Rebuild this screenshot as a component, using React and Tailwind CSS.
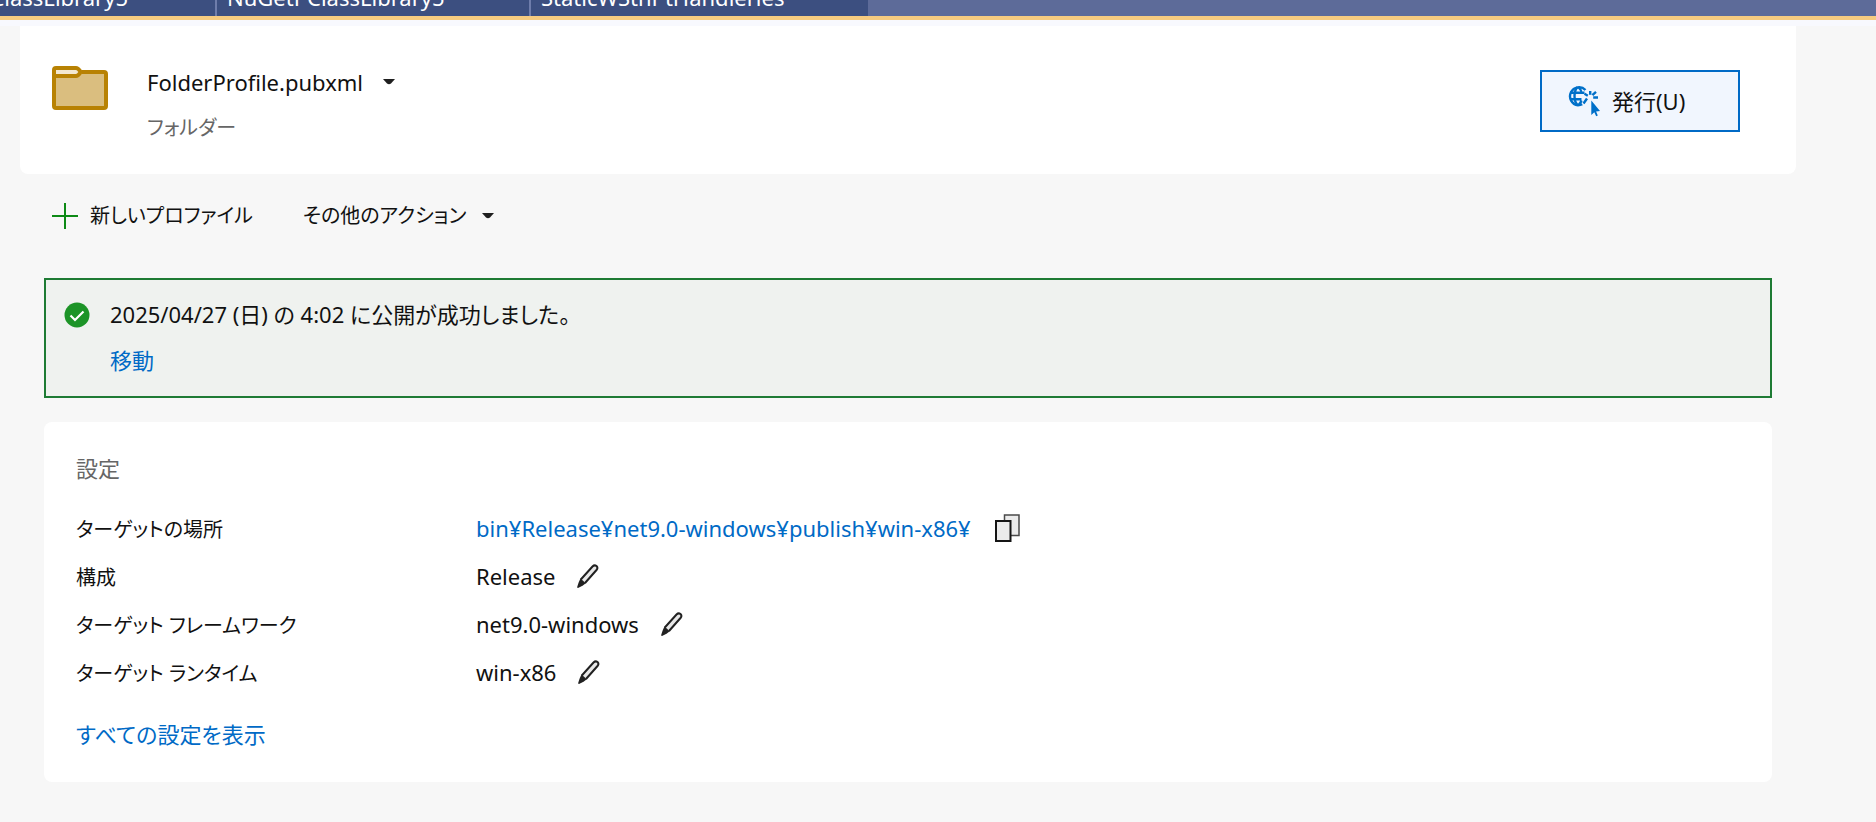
const Caret = () => (
  <svg className="h-[6px] w-3 shrink-0" viewBox="0 0 12 6" fill="#1f1f1f" aria-hidden="true">
    <path d="M0 0h12L8 4.4Q6 6 4 4.4Z" />
  </svg>
);

const FolderIcon = () => (
  <svg className="h-11 w-14 shrink-0" viewBox="0 0 56 44" aria-hidden="true">
    <path d="M2 10V40q0 2 2 2H52q2 0 2-2V8q0-2-2-2H30" fill="#dabe7f" stroke="#b88203" strokeWidth="4" />
    <path d="M2 10V4q0-2 2-2H24q2 0 4 3 1 1 0 2-2 3-4 3Z" fill="#f3e8d0" stroke="#b88203" strokeWidth="4" />
  </svg>
);

const PublishIcon = () => (
  <svg className="h-8 w-8 shrink-0" viewBox="0 0 32 32" aria-hidden="true" fill="none" stroke="#0070c9" strokeWidth="2.400">
    <path d="M17.500 5A9 9 0 1 0 10 20.200c1.500 0 3-.3 4.200-1" />
    <path d="M9.500 2.200C5.500 6 5.500 16 9.500 20M10.500 2.200c2 1.800 3 3.800 3.400 6.500M2 7.800h14.500M2 14.200h11.500M10.500 20c1.500-1.200 2.400-2.700 3-4.500" />
    <path d="M22.200 6v3.800M28 6.800l-3.600 3.400M25.200 12.500H30M19.800 10.800l-3.300-2M19 13.500l-3.500 5" />
    <path d="M23.300 15.500v14.500l3-2.800 1.900 4 1.600-.7-1.700-4 4-.5Z" fill="#0070c9" stroke="none" />
  </svg>
);

const Pencil = () => (
  <svg className="h-6 w-[22px]" viewBox="0 0 22 24" aria-hidden="true">
    <path d="M3.800 15.500 15.500 2.500q2-2 4-.5 1.800 1.800 0 4L8 19" fill="#e8e8e8" stroke="#212121" strokeWidth="2" />
    <path d="M3.500 14.500 8.800 19.300 5.500 21.800 1 24q-1 0-.8-1L1.800 18Z" fill="#212121" />
  </svg>
);

const CopyIcon = () => (
  <svg className="h-7 w-[25px]" viewBox="0 0 25 28" aria-hidden="true" fill="#ebebeb">
    <path d="M9.500 1H24v20.500H9.500Z" stroke="#4a4a4a" strokeWidth="1.500" />
    <path d="M1 7h14.500v20H1Z" stroke="#151515" strokeWidth="2" />
  </svg>
);

const settings = [
  { label: "構成", value: "Release" },
  { label: "ターゲット フレームワーク", value: "net9.0-windows" },
  { label: "ターゲット ランタイム", value: "win-x86" },
];

const link = "text-[#006ac6] hover:underline";

export default function App() {
  return (
    <div className="min-h-screen bg-[#f7f7f7] font-['Noto_Sans','Noto_Sans_CJK_JP',sans-serif] text-[22px] leading-8 text-[#111111] [font-feature-settings:'palt']">
      <nav className="flex h-5 items-end overflow-hidden border-b-4 border-[#f6cb80] bg-[#5d6b99] leading-7 text-white">
        <div className="flex divide-x-2 divide-[#6f7dab] bg-[#3c4f80]">
          <a href="#class-library" className="flex w-[217px] justify-end pr-[87px] pb-[5px] whitespace-nowrap">ClassLibrary5</a>
          <a href="#nuget" className="w-[314px] pb-[5px] pl-[10px] whitespace-nowrap">NuGetPClassLibrary5</a>
          <a href="#handlers" className="w-[337px] pb-[5px] pl-[10px] whitespace-nowrap">StaticWSthPtHandlerles</a>
        </div>
      </nav>
      <div className="h-[6px] bg-[#f8f9fe]" />

      <main className="pr-20 pl-5">
        <header className="flex h-[148px] items-start justify-between rounded-b-lg bg-white pt-10 pr-14 pl-8">
          <div className="flex gap-[39px]">
            <FolderIcon />
            <div>
              <button type="button" className="flex items-center gap-5">
                FolderProfile.pubxml
                <Caret />
              </button>
              <p className="mt-[14px] text-xl leading-8 text-[#666666]">フォルダー</p>
            </div>
          </div>
          <button type="button" className="mt-1 flex h-[62px] w-[200px] items-center gap-3 border-2 border-[#006ac6] bg-[#f1f6fe] pl-[26px]">
            <PublishIcon />
            発行(U)
          </button>
        </header>

        <div className="flex gap-[50px] pt-[26px] pl-8 text-xl leading-8">
          <button type="button" className="flex items-center gap-3">
            <svg className="h-[26px] w-[26px]" viewBox="0 0 26 26" stroke="#0d8a16" strokeWidth="2" aria-hidden="true">
              <path d="M13 0v26M0 13h26" />
            </svg>
            新しいプロファイル
          </button>
          <button type="button" className="flex items-center gap-4">
            その他のアクション
            <Caret />
          </button>
        </div>

        <div className="pr-6 pl-6">
          <section className="mt-[46px] flex h-[120px] gap-5 border-2 border-[#1e7b34] bg-[#eff2ef] pt-[18px] pl-[18px]">
            <svg className="mt-1 h-[26px] w-[26px]" viewBox="0 0 26 26" aria-hidden="true">
              <circle cx="13" cy="13" r="12.500" fill="#1c9427" />
              <path d="m6.500 13.500 4.500 4.500 8.500-8.500" fill="none" stroke="#fff" strokeWidth="2.200" />
            </svg>
            <div>
              <p>2025/04/27 (日) の 4:02 に公開が成功しました。</p>
              <a href="#open" className={`mt-[14px] inline-block ${link}`}>移動</a>
            </div>
          </section>

          <section className="mt-6 h-[360px] rounded-lg bg-white pt-[30px] pl-8">
            <h2 className="text-[#666666]">設定</h2>
            <dl className="mt-5 grid grid-cols-[400px_1fr]">
              <dt className="h-12 pt-[10px] text-xl leading-8">ターゲットの場所</dt>
              <dd className="flex h-12 items-center gap-6">
                <a href="#target" className={link}>bin¥Release¥net9.0-windows¥publish¥win-x86¥</a>
                <button type="button" aria-label="コピー"><CopyIcon /></button>
              </dd>
              {settings.map((s) => (
                <div key={s.label} className="contents">
                  <dt className="h-12 pt-[10px] text-xl leading-8">{s.label}</dt>
                  <dd className="flex h-12 items-center gap-[22px]">
                    {s.value}
                    <button type="button" aria-label={`${s.label} 編集`}><Pencil /></button>
                  </dd>
                </div>
              ))}
            </dl>
            <a href="#all" className={`mt-[22px] inline-block ${link}`}>すべての設定を表示</a>
          </section>
        </div>
      </main>
    </div>
  );
}
